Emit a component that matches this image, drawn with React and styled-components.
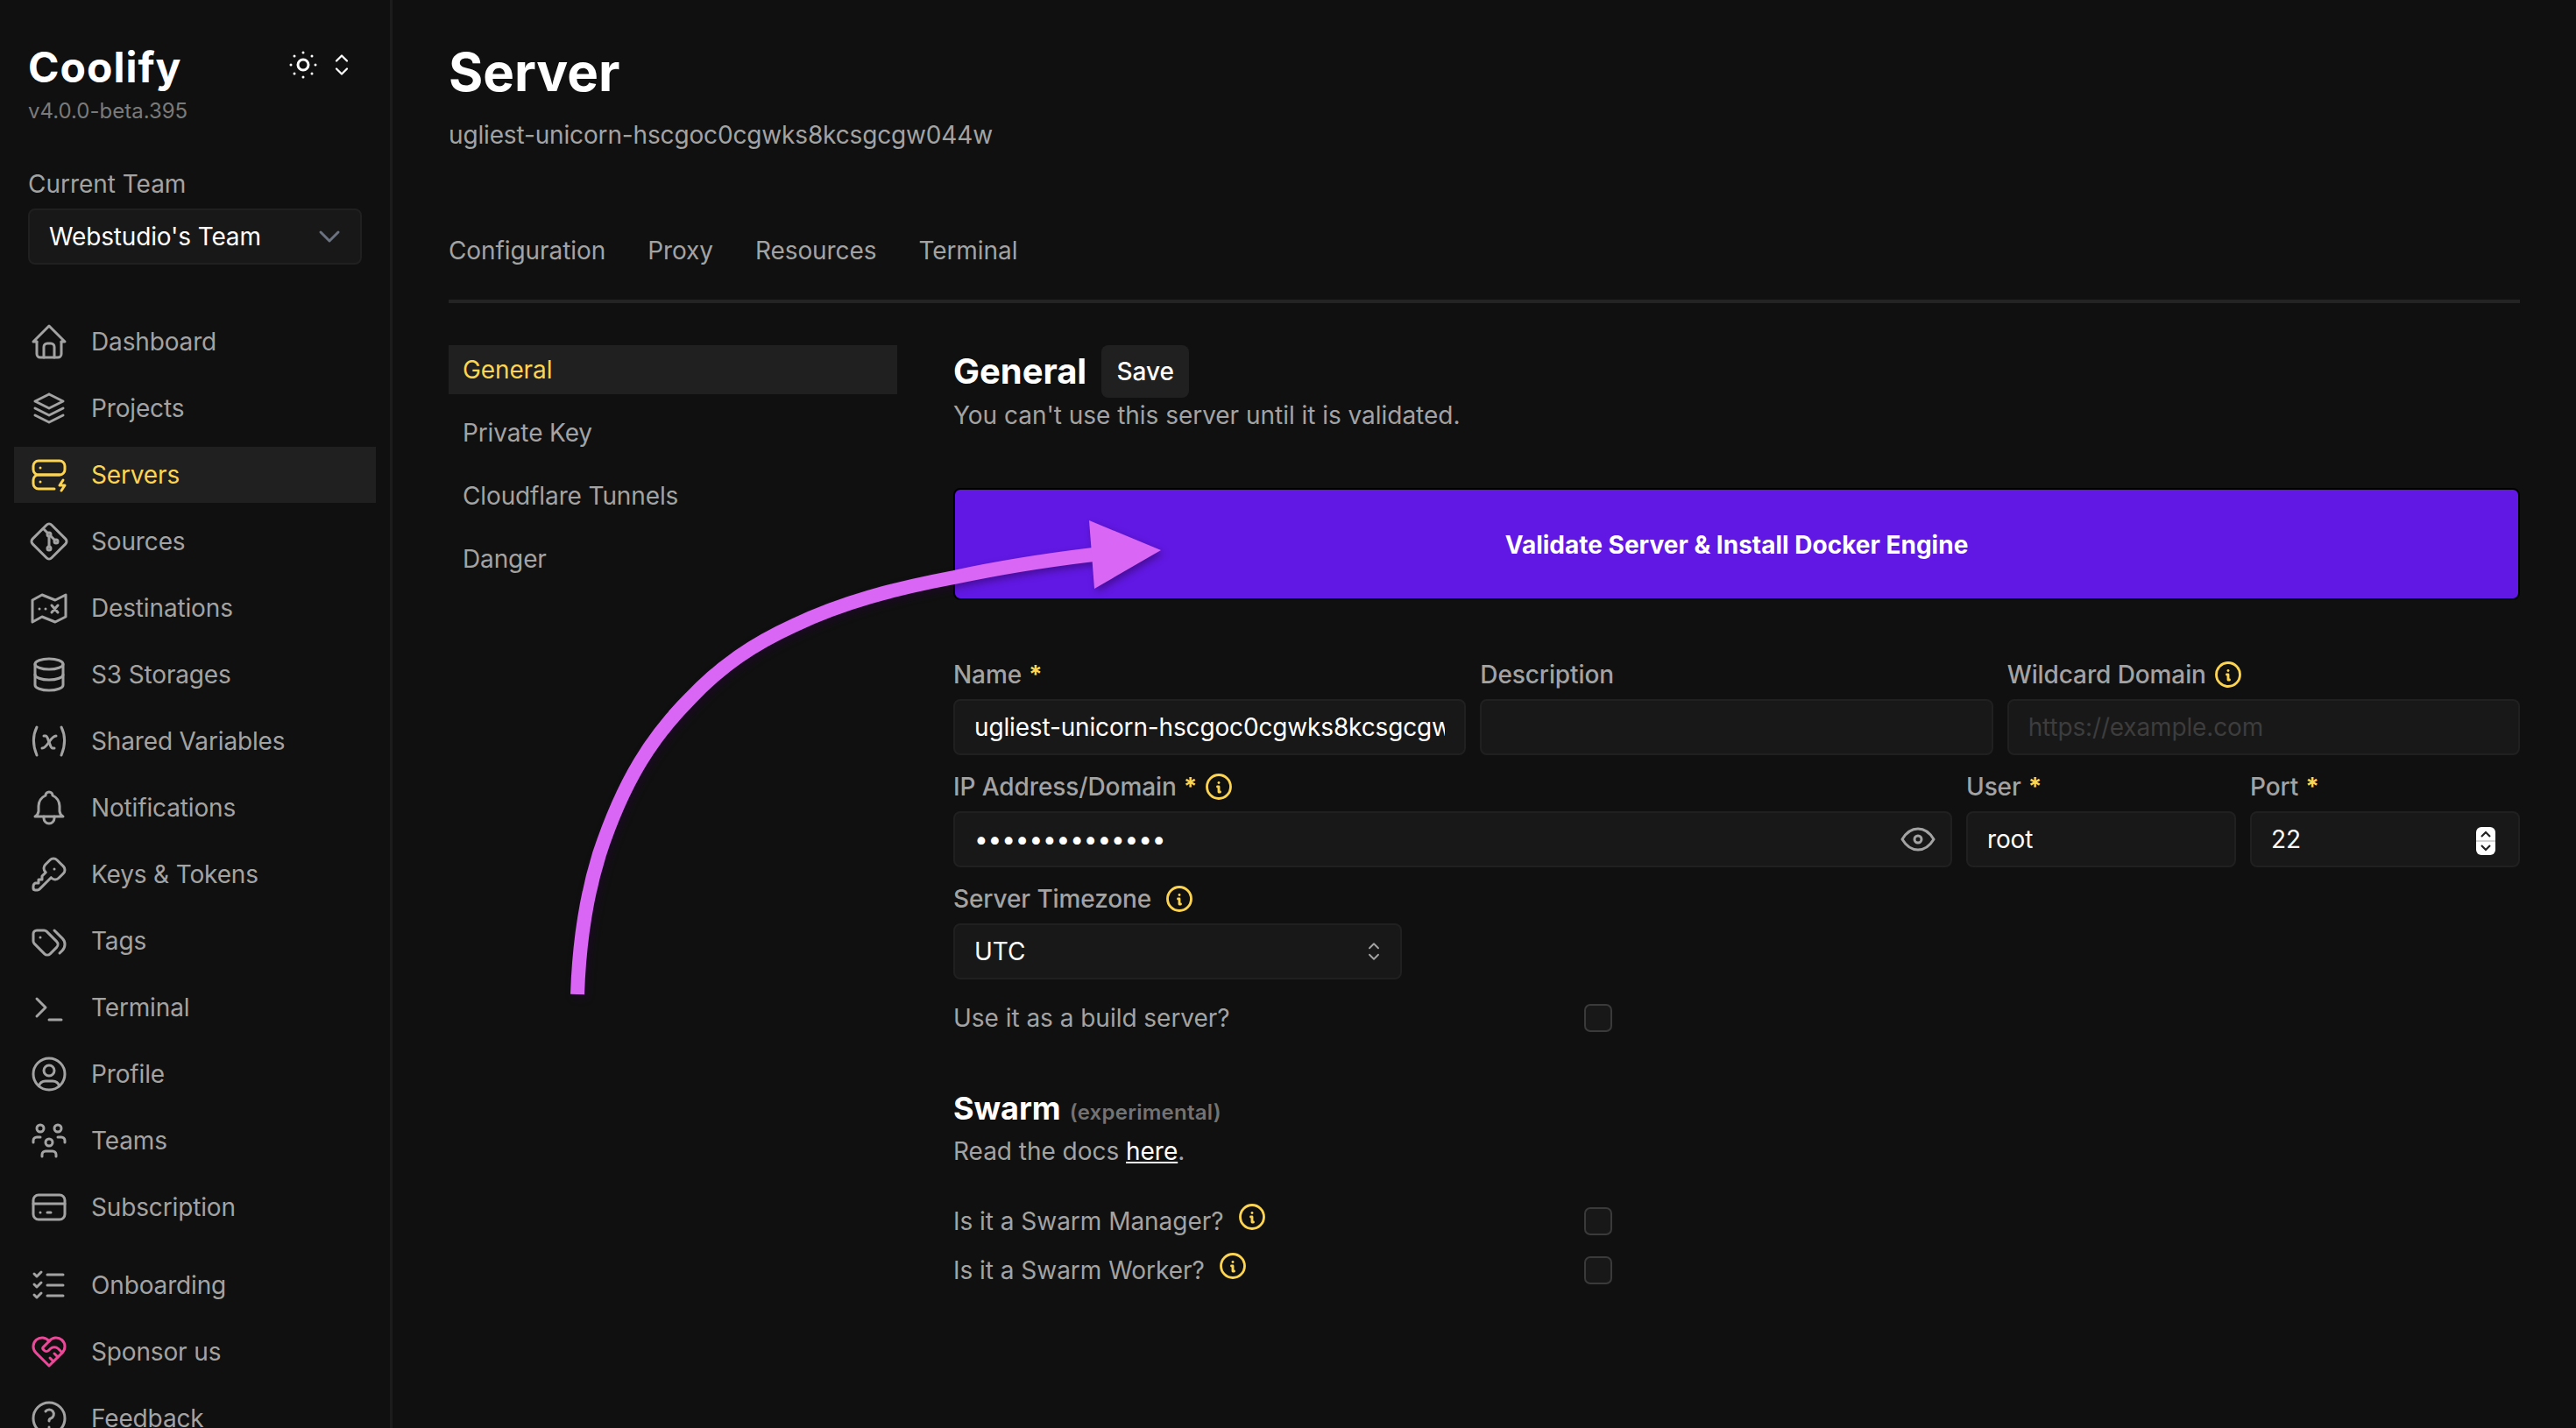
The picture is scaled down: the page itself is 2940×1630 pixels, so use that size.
import React from 'react'
import styled, { createGlobalStyle } from 'styled-components'
import {
  TbHome, TbStack2, TbServerBolt, TbBrandGit, TbDatabase, TbVariable, TbBell, TbKey, TbTags,
  TbTerminal, TbUserCircle, TbUsersGroup, TbCreditCard, TbListCheck, TbHeartHandshake, TbHelp,
  TbBrightnessDown, TbSelector, TbInfoCircle, TbChevronDown, TbEye,
} from 'react-icons/tb'

const GlobalStyle = createGlobalStyle`
  html, body { margin: 0; padding: 0; background: #101010; }
  * { box-sizing: border-box; }
  body { font-family: Inter, "Liberation Sans", sans-serif; font-size: 28px; line-height: 40px; letter-spacing: -0.03px; color: #a3a3a3; }
`

const Shell = styled.div`
  position: relative;
  display: flex;
  width: 2940px;
  height: 1630px;
  overflow: hidden;
  background: #101010;
`

const Sidebar = styled.aside`
  flex: 0 0 448px;
  padding-top: 46px;
  border-right: 3px solid #1c1c1c;
`

const BrandRow = styled.div`
  display: flex;
  justify-content: space-between;
  align-items: center;
  padding: 0 32px;
`

const Brand = styled.div`
  margin-top: 1px;
  font-size: 48px;
  line-height: 60px;
  font-weight: 700;
  letter-spacing: 1px;
  color: #fff;
`

const ThemeSwitch = styled.div`
  display: flex;
  align-items: center;
  gap: 2px;
  margin-right: 5px;
  margin-top: -5px;
  color: #fff;
  svg { stroke-width: 1.5; }
`

const Version = styled.div`
  margin: 4px 0 0 32px;
  font-size: 24px;
  line-height: 32px;
  letter-spacing: 0;
  color: #7a7a7a;
`

const TeamBlock = styled.div`
  margin: 47px 32px 0;
`

const TeamLabel = styled.div`
  margin-bottom: 8px;
`

const Box = styled.div`
  display: flex;
  align-items: center;
  justify-content: space-between;
  height: 64px;
  padding: 0 22px;
  border: 2px solid #202020;
  border-radius: 8px;
  background: #181818;
  color: #fff;
`

const TeamSelect = styled(Box)`
  letter-spacing: -0.15px;
  svg { color: #6b7280; stroke-width: 1.8; margin-right: -7px; }
`

const NavList = styled.nav`
  display: flex;
  flex-direction: column;
  gap: 12px;
  margin: 56px 16px 0;
`

const NavItem = styled.a`
  display: flex;
  align-items: center;
  gap: 24px;
  flex: 0 0 64px;
  height: 64px;
  padding-left: 16px;
  margin-top: ${p => (p.$spaced ? '13px' : '0')};
  letter-spacing: -0.15px;
  color: ${p => (p.$active ? '#fcd452' : '#a3a3a3')};
  background: ${p => (p.$active ? '#202020' : 'transparent')};
  svg {
    flex: none;
    width: 48px;
    height: 48px;
    stroke-width: 1.5;
    color: ${p => (p.$active ? '#fcd452' : p.$pink ? '#ec4899' : '#a3a3a3')};
  }
`

const Main = styled.main`
  flex: 1;
  padding: 46px 64px 0;
`

const Title = styled.h1`
  margin: 0;
  font-size: 60px;
  line-height: 72px;
  font-weight: 700;
  color: #fff;
`

const Subtitle = styled.div`
  margin-top: 16px;
  letter-spacing: -0.15px;
`

const Tabs = styled.div`
  display: flex;
  gap: 48px;
  margin-top: 92px;
  padding-bottom: 36px;
  border-bottom: 4px solid #242424;
  letter-spacing: -0.08px;
`

const Columns = styled.div`
  display: flex;
  gap: 64px;
  margin-top: 48px;
`

const SubNav = styled.div`
  flex: 0 0 512px;
  display: flex;
  flex-direction: column;
  gap: 16px;
`

const SubNavItem = styled.a`
  height: 56px;
  padding: 0 16px;
  line-height: 56px;
  letter-spacing: -0.12px;
  color: ${p => (p.$active ? '#fcd452' : '#a3a3a3')};
  background: ${p => (p.$active ? '#202020' : 'transparent')};
`

const Content = styled.section`
  flex: 1;
  min-width: 0;
`

const HeadRow = styled.div`
  display: flex;
  align-items: center;
  gap: 17px;
  height: 60px;
`

const Heading = styled.h2`
  margin: 0;
  font-size: 40px;
  line-height: 56px;
  font-weight: 700;
  color: #fff;
`

const SaveButton = styled.button`
  width: 100px;
  height: 60px;
  padding: 0;
  border: 0;
  border-radius: 8px;
  background: #202020;
  color: #fff;
  font: 500 28px/40px Inter, "Liberation Sans", sans-serif;
`

const ValidateButton = styled.button`
  display: block;
  width: 100%;
  height: 128px;
  margin-top: 63px;
  padding: 2px 0 0;
  border: 2px solid #000;
  border-radius: 8px;
  background: #6118e4;
  color: #fff;
  font: 700 28px/40px Inter, "Liberation Sans", sans-serif;
`

const FormGrid = styled.div`
  display: grid;
  grid-template-columns: ${p => p.$cols};
  gap: 16px;
  margin-top: ${p => p.$top || '16px'};
`

const Label = styled.label`
  display: flex;
  align-items: center;
  height: 40px;
  margin-bottom: 8px;
  font-weight: 500;
  letter-spacing: -0.1px;
`

const Required = styled.span`
  margin-left: 8px;
  color: #fcd452;
  font-weight: 700;
`

const Info = styled(TbInfoCircle)`
  flex: none;
  width: 36px;
  height: 36px;
  margin-left: ${p => p.$gap || '7px'};
  margin-top: ${p => (p.$raise ? '-10px' : '0')};
  color: #fcd452;
  stroke-width: 1.9;
`

const Input = styled.input`
  display: block;
  width: 100%;
  height: 64px;
  padding: 0 22px;
  border: 2px solid #202020;
  border-radius: 8px;
  background: #181818;
  color: #fff;
  font: 400 28px/40px Inter, "Liberation Sans", sans-serif;
  letter-spacing: -0.15px;
  outline: none;
  &::placeholder { color: #3d3d3d; opacity: 1; }
`

const InputWrap = styled.div`
  position: relative;
`

const EyeIcon = styled(TbEye)`
  position: absolute;
  top: 8px;
  right: 15px;
  width: 48px;
  height: 48px;
  color: #a3a3a3;
  stroke-width: 1.5;
`

const Spinner = styled.svg`
  position: absolute;
  top: 18px;
  right: 28px;
  width: 22px;
  height: 32px;
`

const TimezoneBox = styled(Box)`
  width: 512px;
  svg { color: #a3a3a3; width: 30px; height: 30px; stroke-width: 1.5; margin-right: -7px; }
`

const CheckRow = styled.div`
  display: flex;
  align-items: center;
  justify-content: space-between;
  width: 768px;
  height: 56px;
  padding-right: 16px;
  margin-top: ${p => p.$top || '0'};
`

const CheckLabel = styled.span`
  display: flex;
  align-items: center;
`

const Checkbox = styled.span`
  width: 32px;
  height: 32px;
  border: 2px solid #3a3a3a;
  border-radius: 7px;
  background: #181818;
`

const SwarmHead = styled.div`
  display: flex;
  align-items: baseline;
  gap: 10px;
  margin-top: 49px;
  font-size: 36px;
  line-height: 52px;
  font-weight: 700;
  color: #fff;
`

const Experimental = styled.span`
  font-size: 24px;
  font-weight: 600;
  letter-spacing: 0.25px;
  color: #737373;
`

const Docs = styled.div`
  margin: -2px 0 32px;
  a { color: #fff; text-decoration: underline; }
`

const ArrowOverlay = styled.svg`
  position: absolute;
  left: 0;
  top: 0;
  width: 2940px;
  height: 1630px;
  pointer-events: none;
  filter: drop-shadow(3px 4px 4px rgba(40, 0, 60, 0.45));
`

// tabler has no match for this one, the map with the dots and cross
const MapIcon = () => (
  <svg viewBox="0 0 24 24" fill="none" stroke="currentColor" strokeLinecap="round" strokeLinejoin="round">
    <path d="M2.5 7.5 8 4.5l7.5 3 6-3v12.5l-6 3-7.5-3-5.5 3z" />
    <path d="M6.5 12.5h.01M10 12.5h.01M13.5 10.5l3.5 4M17 10.5l-3.5 4" />
  </svg>
)

const navItems = [
  { label: 'Dashboard', icon: TbHome },
  { label: 'Projects', icon: TbStack2 },
  { label: 'Servers', icon: TbServerBolt, active: true },
  { label: 'Sources', icon: TbBrandGit },
  { label: 'Destinations', icon: MapIcon },
  { label: 'S3 Storages', icon: TbDatabase },
  { label: 'Shared Variables', icon: TbVariable },
  { label: 'Notifications', icon: TbBell },
  { label: 'Keys & Tokens', icon: TbKey },
  { label: 'Tags', icon: TbTags },
  { label: 'Terminal', icon: TbTerminal },
  { label: 'Profile', icon: TbUserCircle },
  { label: 'Teams', icon: TbUsersGroup },
  { label: 'Subscription', icon: TbCreditCard },
  { label: 'Onboarding', icon: TbListCheck, spaced: true },
  { label: 'Sponsor us', icon: TbHeartHandshake, pink: true },
  { label: 'Feedback', icon: TbHelp },
]

const tabs = ['Configuration', 'Proxy', 'Resources', 'Terminal']
const subNav = ['General', 'Private Key', 'Cloudflare Tunnels', 'Danger']

export default function App() {
  return (
    <Shell>
      <GlobalStyle />
      <Sidebar>
        <BrandRow>
          <Brand>Coolify</Brand>
          <ThemeSwitch>
            <TbBrightnessDown size={48} />
            <TbSelector size={36} />
          </ThemeSwitch>
        </BrandRow>
        <Version>v4.0.0-beta.395</Version>
        <TeamBlock>
          <TeamLabel>Current Team</TeamLabel>
          <TeamSelect>
            Webstudio's Team
            <TbChevronDown size={40} />
          </TeamSelect>
        </TeamBlock>
        <NavList>
          {navItems.map(({ label, icon: Icon, active, spaced, pink }) => (
            <NavItem key={label} $active={active} $spaced={spaced} $pink={pink}>
              <Icon />
              {label}
            </NavItem>
          ))}
        </NavList>
      </Sidebar>

      <Main>
        <Title>Server</Title>
        <Subtitle>ugliest-unicorn-hscgoc0cgwks8kcsgcgw044w</Subtitle>
        <Tabs>
          {tabs.map(t => <span key={t}>{t}</span>)}
        </Tabs>
        <Columns>
          <SubNav>
            {subNav.map((s, i) => <SubNavItem key={s} $active={i === 0}>{s}</SubNavItem>)}
          </SubNav>
          <Content>
            <HeadRow>
              <Heading>General</Heading>
              <SaveButton>Save</SaveButton>
            </HeadRow>
            <div>You can't use this server until it is validated.</div>
            <ValidateButton>Validate Server &amp; Install Docker Engine</ValidateButton>

            <FormGrid $cols="repeat(3, 1fr)" $top="65px">
              <div>
                <Label>Name<Required>*</Required></Label>
                <Input readOnly value="ugliest-unicorn-hscgoc0cgwks8kcsgcgw044w" />
              </div>
              <div>
                <Label>Description</Label>
                <Input readOnly value="" />
              </div>
              <div>
                <Label>Wildcard Domain<Info /></Label>
                <Input readOnly value="" placeholder="https://example.com" />
              </div>
            </FormGrid>

            <FormGrid $cols="1fr 308px 308px">
              <div>
                <Label>IP Address/Domain<Required>*</Required><Info /></Label>
                <InputWrap>
                  <Input readOnly type="password" value="12345678901234" />
                  <EyeIcon />
                </InputWrap>
              </div>
              <div>
                <Label>User<Required>*</Required></Label>
                <Input readOnly value="root" />
              </div>
              <div>
                <Label>Port<Required>*</Required></Label>
                <InputWrap>
                  <Input readOnly value="22" />
                  <Spinner viewBox="0 0 22 32" fill="none">
                    <rect width="22" height="32" rx="6" fill="#fff" />
                    <path d="M0 16h22" stroke="#d4d4d4" strokeWidth="2" />
                    <path d="M6 11l5-5 5 5M6 21l5 5 5-5" stroke="#222" strokeWidth="2.2" />
                  </Spinner>
                </InputWrap>
              </div>
            </FormGrid>

            <FormGrid $cols="1fr">
              <div>
                <Label>Server Timezone<Info $gap="14px" /></Label>
                <TimezoneBox>
                  UTC
                  <TbSelector />
                </TimezoneBox>
              </div>
            </FormGrid>

            <CheckRow $top="16px">
              <CheckLabel>Use it as a build server?</CheckLabel>
              <Checkbox />
            </CheckRow>

            <SwarmHead>Swarm <Experimental>(experimental)</Experimental></SwarmHead>
            <Docs>Read the docs <a>here</a>.</Docs>

            <CheckRow>
              <CheckLabel>Is it a Swarm Manager?<Info $gap="14px" $raise /></CheckLabel>
              <Checkbox />
            </CheckRow>
            <CheckRow>
              <CheckLabel>Is it a Swarm Worker?<Info $gap="14px" $raise /></CheckLabel>
              <Checkbox />
            </CheckRow>
          </Content>
        </Columns>
      </Main>

      <ArrowOverlay viewBox="0 0 2940 1630" fill="none">
        <path d="M659 1135C661 1075 670 1020 684 975C712 890 745 840 788 797C823 760 860 735 906 714C960 688 1020 672 1089 659C1140 648 1190 640 1248 633" stroke="#d966f5" strokeWidth="16" />
        <path d="M1243 594L1325 628L1249 672z" fill="#d966f5" />
      </ArrowOverlay>
    </Shell>
  )
}
